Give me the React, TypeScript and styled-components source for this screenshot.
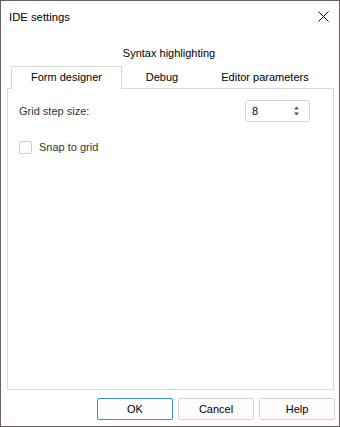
import React from "react";
import styled, { createGlobalStyle } from "styled-components";

const Global = createGlobalStyle`
  html, body { margin: 0; padding: 0; background: #fff; }
  * { box-sizing: border-box; }
  body { font-family: "Liberation Sans", Arial, sans-serif; font-size: 11px; color: #000; }
`;

const Window = styled.div`
  width: 340px;
  height: 427px;
  border: 1px solid #6a6060;
  background: #fff;
  display: flex;
  flex-direction: column;
`;

const TitleBar = styled.div`
  height: 30px;
  flex: none;
  display: flex;
  align-items: center;
  justify-content: space-between;
  padding: 1px 10px 0 8px;
`;

const Title = styled.span`
  font-size: 11.3px;
  color: #000;
`;

const CloseButton = styled.button`
  border: none;
  background: none;
  padding: 0;
  width: 11px;
  height: 11px;
  display: flex;
`;

const Content = styled.div`
  flex: 1;
  display: flex;
  flex-direction: column;
  padding: 0 5px 0 6px;
`;

const TabHeader = styled.div`
  height: 57px;
  flex: none;
  display: flex;
  flex-direction: column;
`;

const TabRow = styled.div<{ $back?: boolean }>`
  display: flex;
  height: ${(p) => (p.$back ? "35px" : "22px")};
  padding-left: ${(p) => (p.$back ? "101px" : "4px")};
  align-items: ${(p) => (p.$back ? "flex-start" : "stretch")};
  padding-top: ${(p) => (p.$back ? "11px" : "0")};
`;

const Tab = styled.div<{ $w: number; $active?: boolean }>`
  width: ${(p) => p.$w}px;
  height: ${(p) => (p.$active ? "23px" : "22px")};
  line-height: 20px;
  text-align: center;
  font-size: 11px;
  color: #000;
  background: #fff;
  border: 1px solid ${(p) => (p.$active ? "#d9d9d9" : "transparent")};
  border-bottom: none;
  position: relative;
  z-index: ${(p) => (p.$active ? 1 : 0)};
  white-space: nowrap;
`;

const Pane = styled.div`
  flex: 1;
  border: 1px solid #d9d9d9;
  padding: 11px 23px 0 11px;
  display: flex;
  flex-direction: column;
  gap: 15px;
`;

const FieldRow = styled.div`
  height: 22px;
  display: flex;
  align-items: center;
  justify-content: space-between;
`;

const Label = styled.span`
  font-size: 11px;
  color: #333;
`;

const Spinner = styled.div`
  width: 65px;
  height: 22px;
  border: 1px solid #d6d6d6;
  border-radius: 3px;
  display: flex;
  align-items: center;
  justify-content: space-between;
  padding: 0 9px 0 6px;
  font-size: 11px;
  color: #000;
`;

const CheckRow = styled.label`
  height: 20px;
  display: flex;
  align-items: center;
  gap: 7px;
`;

const CheckBox = styled.span`
  width: 13px;
  height: 13px;
  border: 1px solid #cfcfcf;
  border-radius: 2px;
  background: #fff;
`;

const Footer = styled.div`
  height: 36px;
  flex: none;
  display: flex;
  justify-content: flex-end;
  align-items: flex-start;
  gap: 5px;
  padding: 8px 4px 0 0;
`;

const Button = styled.button<{ $primary?: boolean }>`
  width: 76px;
  height: 22px;
  border: 1px solid ${(p) => (p.$primary ? "#3a8ed4" : "#d4d4d4")};
  border-radius: 2px;
  background: #fdfdfd;
  font-family: inherit;
  font-size: 11px;
  color: #000;
  padding: 0;
`;

export default function App() {
  return (
    <>
      <Global />
      <Window>
        <TitleBar>
          <Title>IDE settings</Title>
          <CloseButton aria-label="Close">
            <svg width="11" height="11" viewBox="0 0 11 11">
              <path d="M0.5 0.5 L10.5 10.5 M10.5 0.5 L0.5 10.5" stroke="#000" strokeWidth="1" fill="none" />
            </svg>
          </CloseButton>
        </TitleBar>
        <Content>
          <TabHeader>
            <TabRow $back>
              <Tab $w={122}>Syntax highlighting</Tab>
            </TabRow>
            <TabRow>
              <Tab $w={111} $active>Form designer</Tab>
              <Tab $w={80}>Debug</Tab>
              <Tab $w={126}>Editor parameters</Tab>
            </TabRow>
          </TabHeader>
          <Pane>
            <FieldRow>
              <Label>Grid step size:</Label>
              <Spinner>
                <span>8</span>
                <svg width="7" height="12" viewBox="0 0 7 12">
                  <path d="M3.5 1.5 L6 4.5 L1 4.5 Z" fill="#555" />
                  <path d="M3.5 10.5 L6 7.5 L1 7.5 Z" fill="#555" />
                </svg>
              </Spinner>
            </FieldRow>
            <CheckRow>
              <CheckBox />
              <Label>Snap to grid</Label>
            </CheckRow>
          </Pane>
        </Content>
        <Footer>
          <Button $primary>OK</Button>
          <Button>Cancel</Button>
          <Button>Help</Button>
        </Footer>
      </Window>
    </>
  );
}
